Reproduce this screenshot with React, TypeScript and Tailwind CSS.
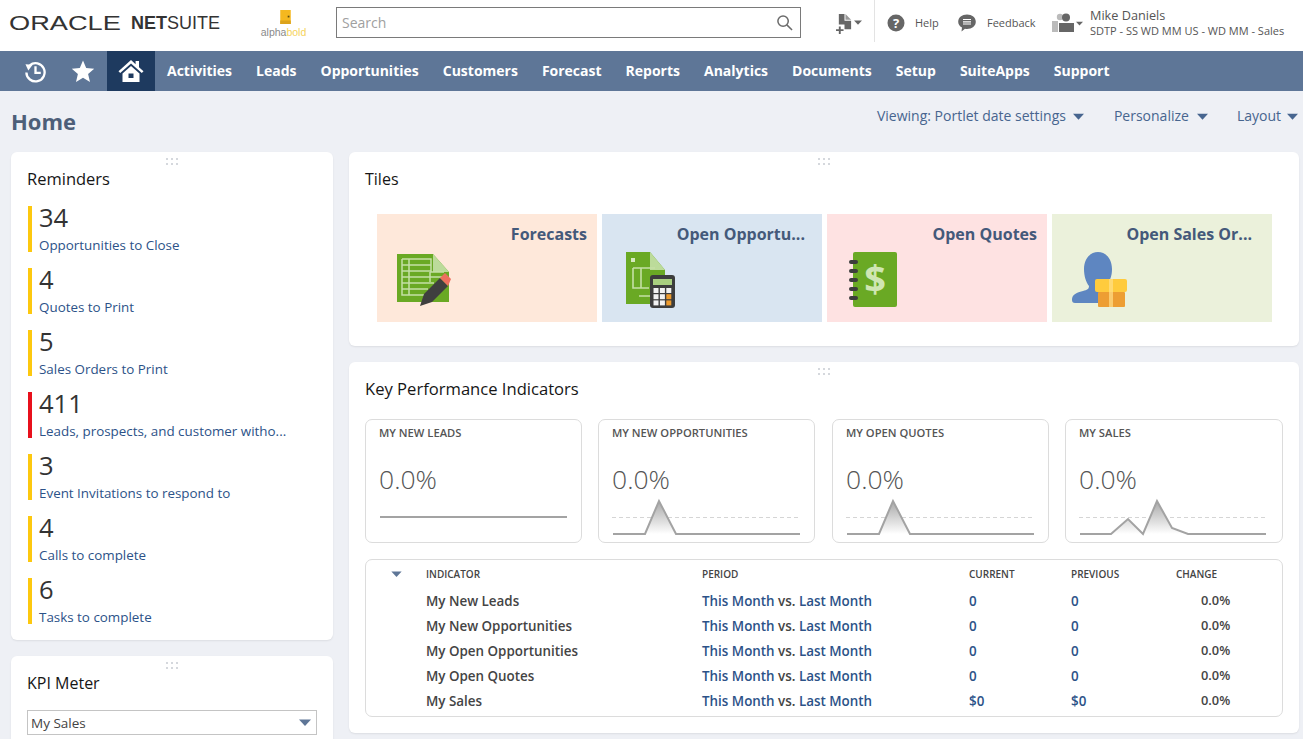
import React from "react";

const navItems = ["Activities", "Leads", "Opportunities", "Customers", "Forecast", "Reports", "Analytics", "Documents", "Setup", "SuiteApps", "Support"];

const reminders = [
    { count: "34", label: "Opportunities to Close", bar: "bg-[#fdc80f]" },
    { count: "4", label: "Quotes to Print", bar: "bg-[#fdc80f]" },
    { count: "5", label: "Sales Orders to Print", bar: "bg-[#fdc80f]" },
    { count: "411", label: "Leads, prospects, and customer witho...", bar: "bg-[#e8101c]" },
    { count: "3", label: "Event Invitations to respond to", bar: "bg-[#fdc80f]" },
    { count: "4", label: "Calls to complete", bar: "bg-[#fdc80f]" },
    { count: "6", label: "Tasks to complete", bar: "bg-[#fdc80f]" },
];

const rows = [
    { name: "My New Leads", current: "0", previous: "0" },
    { name: "My New Opportunities", current: "0", previous: "0" },
    { name: "My Open Opportunities", current: "0", previous: "0" },
    { name: "My Open Quotes", current: "0", previous: "0" },
    { name: "My Sales", current: "$0", previous: "$0" },
];

const Caret: React.FC<{ className?: string }> = ({ className }) => (
    <svg viewBox="0 0 12 7" className={className}>
        <path d="M0 0.5h12L6 7z" fill="currentColor" />
    </svg>
);

const DragHandle = () => (
    <div className="absolute top-[6px] left-1/2 -translate-x-1/2 grid grid-cols-3 gap-x-[3px] gap-y-[3px]">
        {[0, 1, 2, 3, 4, 5].map((i) => (
            <span key={i} className="w-[2px] h-[2px] bg-[#d5d8dd]" />
        ))}
    </div>
);

const Card: React.FC<{ title: string; titleClass?: string; className?: string; children: React.ReactNode }> = ({ title, titleClass, className, children }) => (
    <section className={"relative bg-white rounded-[6px] shadow-[0_1px_2px_rgba(0,0,0,0.08)] " + className}>
        <DragHandle />
        <h2 className={"leading-[22px] text-[#161616] " + titleClass}>{title}</h2>
        {children}
    </section>
);

const HistoryIcon = () => (
    <svg viewBox="0 0 24 24" className="w-[23px] h-[23px] text-white" fill="none" stroke="currentColor" strokeWidth="2.4">
        <path d="M6 5.500A9.500 9.500 0 1 1 2.500 13" />
        <path d="M1.500 4.500l7.500 .5-4.500 6z" fill="currentColor" strokeWidth="0" />
        <path d="M12 6.500v7h5.500" />
    </svg>
);

const HomeIcon = () => (
    <svg viewBox="0 0 26 24" className="w-[26px] h-[24px] text-white">
        <path fill="currentColor" d="M13 1 0.5 12.2l1.7 1.9L13 4.500l10.800 9.600 1.700-1.900L21 8.200V2h-3.400v3.200z" />
        <path fill="currentColor" d="M4.500 14.500 13 7l8.500 7.500V23h-17zM10.500 14.500V19h5v-4.500z" fillRule="evenodd" />
    </svg>
);

const ForecastIcon = () => (
    <svg viewBox="0 0 56 54" className="w-[56px] h-[54px]">
        <path fill="#6aa924" d="M1 0h36l16 18v30H1z" />
        <path fill="#bcdb9a" d="M37 0l16 18H37z" />
        <path fill="none" stroke="#c5e0a5" strokeWidth="1.500" d="M6 5h29v13h13M6 5v36h30M13 5v36M6 11h29M6 17h29M6 23h40M6 29h32M6 35h26M34 18v10" />
        <path fill="#3f3f3f" d="M24 52l4-12 16-16 8 8-16 16z" />
        <path fill="#ee6f5f" d="M44 24l5-5 6 6-3 7z" />
    </svg>
);

const OpportunityIcon = () => (
    <svg viewBox="0 0 52 58" className="w-[52px] h-[58px]">
        <path fill="#6aa924" d="M1 0h24l15 18v34H1z" />
        <path fill="#bcdb9a" d="M25 0l15 18H25z" />
        <rect x="6" y="6" width="4" height="4" fill="#d6e9c0" />
        <path fill="none" stroke="#c5e0a5" strokeWidth="1.600" d="M8 16h22M8 16v20h16M16 16v20M26 44H14" />
        <rect x="25" y="23" width="25" height="33" rx="3" fill="#3d3d3d" />
        <rect x="28" y="27" width="19" height="6" fill="#a9cf7f" />
        {[0, 1, 2].map((r) =>
            [0, 1, 2].map((c) => (
                <rect key={r + "-" + c} x={28.5 + c * 6.4} y={36 + r * 6.2} width="5" height="5" fill={c === 2 && r > 0 ? "#ee9b2d" : "#f2f2f2"} />
            ))
        )}
    </svg>
);

const QuoteIcon = () => (
    <svg viewBox="0 0 48 56" className="w-[48px] h-[56px]">
        <rect x="4" y="0" width="44" height="55" rx="2" fill="#6aa924" />
        {[8, 17, 26, 35, 44].map((y) => (
            <rect key={y} x="0" y={y} width="9" height="4" rx="2" fill="#3d3d3d" />
        ))}
        <text x="26" y="41" textAnchor="middle" fontSize="38" fontWeight="700" fill="#cfe6b2" fontFamily="'Open Sans', sans-serif">$</text>
    </svg>
);

const SalesOrderIcon = () => (
    <svg viewBox="0 0 56 56" className="w-[56px] h-[56px]">
        <path fill="#5e86c1" d="M26 0c8 0 14 7 14 17 0 7-2 12-6 16v18H3c-2 0-3-1-3-3 0-5 3-7 11-9 4-1 6-2 6-5-3-4-5-10-5-17C12 7 18 0 26 0z" />
        <rect x="23" y="27" width="32" height="13" rx="2" fill="#ffcb3d" />
        <rect x="26" y="40" width="27" height="15" rx="1" fill="#ed9e33" />
        <rect x="37" y="27" width="4" height="28" fill="#ffdf8a" opacity="0.7" />
    </svg>
);

const tiles = [
    { title: "Forecasts", bg: "bg-[#fee8da]", pr: "pr-[10px]", icon: <ForecastIcon />, pad: "pl-[19px] pt-[9px]" },
    { title: "Open Opportu...", bg: "bg-[#d9e5f1]", pr: "pr-[17px]", icon: <OpportunityIcon />, pad: "pl-[23px] pt-[7px]" },
    { title: "Open Quotes", bg: "bg-[#fee2e2]", pr: "pr-[10px]", icon: <QuoteIcon />, pad: "pl-[22px] pt-[7px]" },
    { title: "Open Sales Or...", bg: "bg-[#ebf1db]", pr: "pr-[20px]", icon: <SalesOrderIcon />, pad: "pl-[20px] pt-[7px]" },
];

const Sparkline: React.FC<{ points: number[][]; flat?: boolean }> = ({ points, flat }) => {
    const line = points.map((p) => p.join(",")).join(" ");
    const id = "fade" + points.length + (flat ? "f" : "");
    return (
        <svg width="190" height="42" viewBox="0 0 190 42" className="block">
            <defs>
                <linearGradient id={id} x1="0" y1="0" x2="0" y2="1">
                    <stop offset="0" stopColor="#a8a8a8" />
                    <stop offset="1" stopColor="#ffffff" />
                </linearGradient>
            </defs>
            {flat ? null : <path d="M0 19.500H188" stroke="#d5d5d5" strokeDasharray="4 3" fill="none" />}
            {flat ? null : <polygon points={line + " 187,36 0,36"} fill={"url(#" + id + ")"} />}
            <polyline points={line} fill="none" stroke="#a3a3a3" strokeWidth="2" />
        </svg>
    );
};

const singlePeak = [[1, 36], [33, 36], [47, 3], [64, 36], [188, 36]];

const kpis = [
    { title: "MY NEW LEADS", points: [[1, 19], [188, 19]], flat: true, className: "w-[217px]" },
    { title: "MY NEW OPPORTUNITIES", points: singlePeak, flat: false, className: "w-[217px] ml-[16px]" },
    { title: "MY OPEN QUOTES", points: singlePeak, flat: false, className: "w-[217px] ml-[17px]" },
    { title: "MY SALES", points: [[1, 36], [32, 36], [49, 21], [64, 36], [78, 3], [93, 30], [109, 36], [187, 36]], flat: false, className: "w-[218px] ml-[16px]" },
];

const App = () => {
    return (
        <div className="w-[1303px] h-[739px] overflow-hidden bg-[#eef0f5] font-['Open_Sans',sans-serif] flex flex-col">
            <header className="h-[51px] shrink-0 bg-white flex items-start">
                <div className="w-[131px] pl-[9px] pt-[10px] h-[42px] overflow-hidden shrink-0">
                    <span className="inline-block origin-left scale-x-[1.36] font-['Liberation_Sans',sans-serif] text-[20px] leading-[26px] text-[#333]">ORACLE</span>
                </div>
                <div className="w-[125px] pt-[10px] shrink-0 font-['Liberation_Sans',sans-serif] text-[18px] leading-[26px] text-[#333] whitespace-nowrap">
                    <span className="font-bold">NET</span>SUITE
                </div>
                <div className="w-[80px] shrink-0 pl-[5px] pt-[10px] flex flex-col items-center">
                    <svg viewBox="0 0 12 16" className="w-[11px] h-[14px] -ml-[26px]">
                        <rect width="12" height="16" fill="#f5b81f" />
                        <rect y="12" width="12" height="4" fill="#dca31a" />
                        <rect x="8.500" y="6.500" width="2" height="2" fill="#5a4a10" />
                    </svg>
                    <div className="-ml-[30px] mt-[3px] text-[10.500px] leading-[11px] font-['Liberation_Sans',sans-serif] whitespace-nowrap text-[#8a8a8a]">
                        alpha<span className="text-[#f5d25c]">bold</span>
                    </div>
                </div>
                <div className="mt-[7px] w-[465px] h-[31px] shrink-0 border border-[#7a7a7a] flex items-center justify-between pl-[5px] pr-[7px]">
                    <span className="text-[14px] text-[#a0a0a0]">Search</span>
                    <svg viewBox="0 0 18 18" className="w-[17px] h-[17px]" fill="none" stroke="#6b6b6b" strokeWidth="1.600">
                        <circle cx="7.500" cy="7.500" r="5.500" />
                        <path d="M11.500 11.500L17 17" />
                    </svg>
                </div>
                <div className="ml-[35px] mt-[14px] w-[26px] shrink-0 flex items-start">
                    <svg viewBox="0 0 18 22" className="w-[17px] h-[21px]">
                        <path fill="#666" d="M3 0h6v7h7v9H9v-5H3z" />
                        <path fill="#999" d="M10 0l6 6h-6z" />
                        <path stroke="#666" strokeWidth="2" fill="none" d="M0 17h8M4 13v8" />
                    </svg>
                    <Caret className="w-[8px] h-[5px] mt-[6px] ml-[1px] text-[#666]" />
                </div>
                <div className="ml-[12px] w-px h-[42px] bg-[#e3e3e3] shrink-0" />
                <svg viewBox="0 0 18 18" className="ml-[12px] mt-[14px] w-[18px] h-[18px] shrink-0">
                    <circle cx="9" cy="9" r="8.500" fill="#666" />
                    <text x="9" y="13.500" textAnchor="middle" fontSize="13" fontWeight="700" fill="#fff" fontFamily="'Open Sans', sans-serif">?</text>
                </svg>
                <span className="ml-[10px] mt-[15px] w-[43px] shrink-0 text-[11px] leading-[15px] text-[#555]">Help</span>
                <svg viewBox="0 0 18 18" className="mt-[14px] w-[18px] h-[18px] shrink-0">
                    <path fill="#666" d="M9 0.500c5 0 8.800 3 8.800 7.200s-3.800 7.200-8.800 7.200c-.7 0-1.300 0-2-.2L3.500 17.500l.5-4C1.500 12.200.2 10.200.2 7.700.2 3.500 4 .5 9 .5z" />
                    <path stroke="#fff" strokeWidth="1.200" d="M5 5.500h8M5 7.800h8M5 10h8" />
                </svg>
                <span className="ml-[11px] mt-[15px] w-[65px] shrink-0 text-[11px] leading-[15px] text-[#555]">Feedback</span>
                <div className="mt-[13px] w-[38px] shrink-0 flex items-start">
                    <svg viewBox="0 0 22 20" className="w-[22px] h-[20px]">
                        <circle cx="8" cy="4" r="3.200" fill="#bbb" />
                        <rect x="0" y="8" width="6" height="11" fill="#bbb" />
                        <circle cx="14" cy="4.500" r="4" fill="#666" />
                        <path fill="#666" d="M7 10h15v9H7z" />
                    </svg>
                    <Caret className="w-[7px] h-[5px] mt-[8px] ml-[2px] text-[#666]" />
                </div>
                <div className="mt-[8px] shrink-0">
                    <div className="text-[12.700px] leading-[15px] text-[#555]">Mike Daniels</div>
                    <div className="text-[11px] leading-[16px] text-[#555] whitespace-nowrap">SDTP - SS WD MM US - WD MM - Sales</div>
                </div>
            </header>

            <nav className="h-[40px] shrink-0 bg-[#5e7697] flex items-center">
                <div className="w-[59px] flex justify-end pr-[12px]"><HistoryIcon /></div>
                <svg viewBox="0 0 24 24" className="ml-[12px] w-[24px] h-[24px] text-white shrink-0">
                    <path fill="currentColor" d="M12 1.500l3.200 7.500 8 .7-6.100 5.300 1.900 7.900-7-4.200-7 4.200 1.900-7.900L.8 9.700l8-.7z" />
                </svg>
                <div className="ml-[12px] w-[48px] h-full bg-[#1e3a5f] flex items-center justify-center shrink-0"><HomeIcon /></div>
                <div className="ml-[12px] pb-[2px] flex gap-[24px]">
                    {navItems.map((item) => (
                        <span key={item} className="text-[14px] font-bold text-white whitespace-nowrap">{item}</span>
                    ))}
                </div>
            </nav>

            <div className="h-[61px] shrink-0 flex items-start justify-between pl-[11px] pr-[5px]">
                <h1 className="mt-[13px] text-[22px] leading-[34px] font-bold text-[#4d5f79]">Home</h1>
                <div className="mt-[14px] flex text-[14px] leading-[22px] text-[#47658f]">
                    <span className="flex items-center gap-[7px]">Viewing: Portlet date settings <Caret className="w-[11px] h-[7px] text-[#47658f]" /></span>
                    <span className="ml-[30px] flex items-center gap-[8px]">Personalize <Caret className="w-[11px] h-[7px] text-[#47658f]" /></span>
                    <span className="ml-[29px] flex items-center gap-[6px]">Layout <Caret className="w-[11px] h-[7px] text-[#47658f]" /></span>
                </div>
            </div>

            <main className="flex gap-[16px] pl-[11px] items-start">
                <div className="w-[322px] shrink-0 flex flex-col gap-[16px]">
                    <Card title="Reminders" titleClass="text-[16.500px]" className="px-[16px] pt-[16px] h-[488px]">
                        <div className="mt-[16px] ml-[1px] flex flex-col gap-[16px]">
                            {reminders.map((r, i) => (
                                <div key={i} className="flex h-[46px]">
                                    <div className={"w-[4px] shrink-0 " + r.bar} />
                                    <div className="pl-[7px]">
                                        <div className="-mt-[2px] text-[25.500px] leading-[26px] text-[#333]">{r.count}</div>
                                        <div className="mt-[7px] text-[13.400px] leading-[17px] text-[#2c5288] whitespace-nowrap">{r.label}</div>
                                    </div>
                                </div>
                            ))}
                        </div>
                    </Card>
                    <Card title="KPI Meter" titleClass="text-[16px]" className="px-[16px] pt-[16px] h-[120px]">
                        <div className="mt-[16px] h-[25px] border border-[#c4c4c4] flex items-center justify-between pl-[3px] pr-[5px]">
                            <span className="text-[13.500px] leading-[20px] pt-[1px] text-[#444]">My Sales</span>
                            <Caret className="w-[12px] h-[7px] text-[#5e7697]" />
                        </div>
                    </Card>
                </div>

                <div className="w-[950px] shrink-0 flex flex-col gap-[16px]">
                    <Card title="Tiles" titleClass="text-[16px]" className="px-[16px] pt-[16px] h-[194px]">
                        <div className="mt-[24px] ml-[12px] flex gap-[5px]">
                            {tiles.map((t) => (
                                <div key={t.title} className={"w-[220px] h-[108px] overflow-hidden " + t.bg}>
                                    <div className={"pt-[9px] text-right text-[16px] leading-[22px] font-bold text-[#44597a] " + t.pr}>{t.title}</div>
                                    <div className={t.pad}>{t.icon}</div>
                                </div>
                            ))}
                        </div>
                    </Card>

                    <Card title="Key Performance Indicators" titleClass="text-[16.600px]" className="px-[16px] pt-[16px] h-[371px]">
                        <div className="mt-[19px] flex">
                            {kpis.map((k) => (
                                <div key={k.title} className={"h-[124px] border border-[#dcdcdc] rounded-[7px] pl-[13px] pt-[6px] " + k.className}>
                                    <div className="text-[11.200px] leading-[14px] font-semibold text-[#555] whitespace-nowrap">{k.title}</div>
                                    <div className="mt-[22px] text-[26.500px] leading-[34px] font-light text-[#555]">0.0%</div>
                                    <div className="mt-[2px]"><Sparkline points={k.points} flat={k.flat} /></div>
                                </div>
                            ))}
                        </div>
                        <div className="mt-[16px] h-[158px] w-[918px] border border-[#dcdcdc] rounded-[7px] pt-[6px]">
                            <div className="grid grid-cols-[60px_276px_267px_102px_105px_1fr] items-center h-[16px] text-[10px] font-semibold text-[#444]">
                                <Caret className="ml-[25px] w-[11px] h-[6px] text-[#5e7697]" />
                                <span>INDICATOR</span>
                                <span>PERIOD</span>
                                <span>CURRENT</span>
                                <span>PREVIOUS</span>
                                <span>CHANGE</span>
                            </div>
                            <div className="mt-[7px]">
                                {rows.map((r) => (
                                    <div key={r.name} className="grid grid-cols-[60px_276px_267px_102px_130px_1fr] items-center h-[25px] text-[13.400px] font-semibold text-[#444]">
                                        <span />
                                        <span>{r.name}</span>
                                        <span><span className="text-[#2c5288]">This Month</span> vs. <span className="text-[#2c5288]">Last Month</span></span>
                                        <span className="text-[#2c5288]">{r.current}</span>
                                        <span className="text-[#2c5288]">{r.previous}</span>
                                        <span className="text-[12.800px] -mt-[2px]">0.0%</span>
                                    </div>
                                ))}
                            </div>
                        </div>
                    </Card>
                </div>
            </main>
        </div>
    );
};

export default App;
